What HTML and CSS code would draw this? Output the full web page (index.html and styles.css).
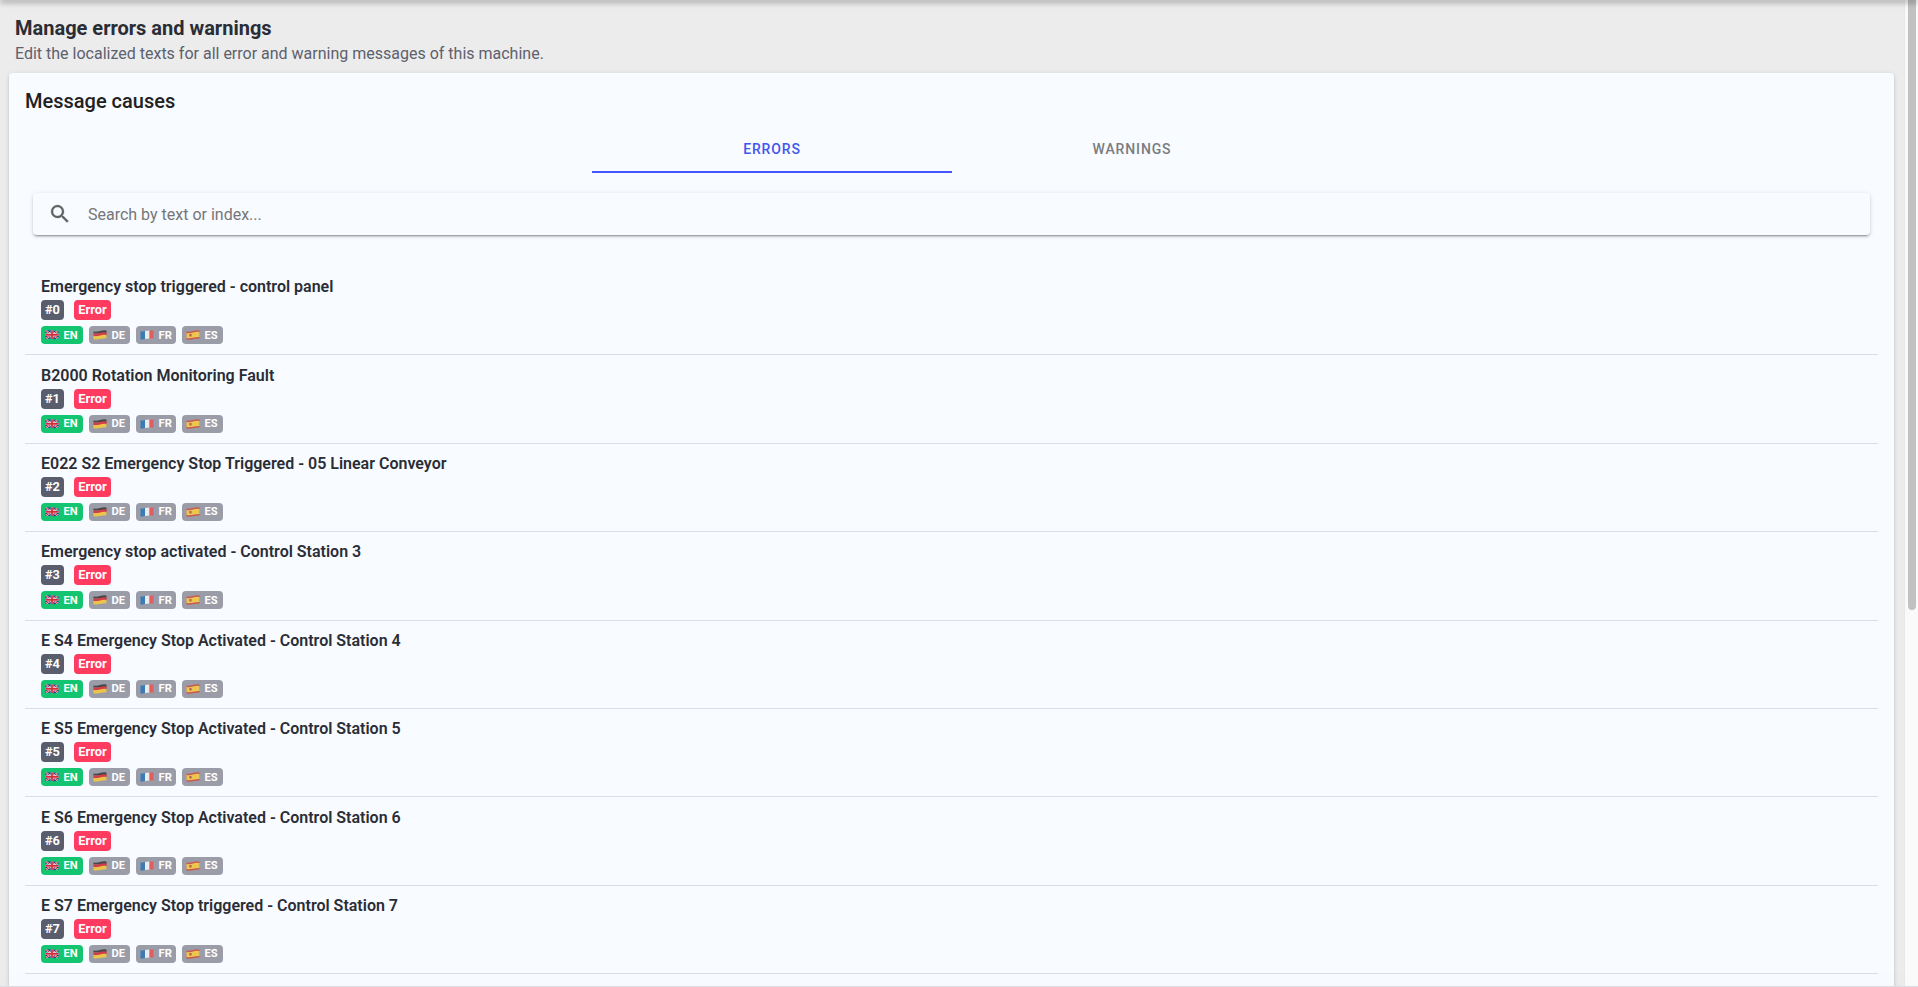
FILE: index.html
```html
<!DOCTYPE html>
<html lang="en">
<head>
  <meta charset="UTF-8">
  <title>Manage errors and warnings</title>
  <link rel="stylesheet" href="styles.css">
</head>
<body>

  <svg class="sprite" width="0" height="0">
    <symbol id="flag-en" viewBox="0 0 28 20">
      <path fill="#27417f" d="M1 2q7-2 13-1t13 0v16q-7 2-13 1t-13 0z"/>
      <path stroke="#fff" stroke-width="3" d="M2 2l24 15M26 2L2 17"/>
      <path stroke="#d22b3b" stroke-width="2" d="M2 2l24 15M26 2L2 17"/>
      <path stroke="#fff" stroke-width="5" d="M14 1v17M1 9.500h26"/>
      <path stroke="#d22b3b" stroke-width="3.500" d="M14 1v17M1 9.500h26"/>
    </symbol>
    <symbol id="flag-de" viewBox="0 0 28 20">
      <path fill="#333" d="M1 3q7 1 13-1t13-1v6H1z"/>
      <path fill="#e0262e" d="M1 7q7 1 13-1t13-1v7H1z"/>
      <path fill="#ffcf35" d="M1 12q7 1 13-1t13-1v6.500q-7 0-13 1.500t-13 .5z"/>
    </symbol>
    <symbol id="flag-fr" viewBox="0 0 28 20">
      <path fill="#2473b8" d="M1 3q5 0 9-1v16q-4 1-9 1z"/>
      <path fill="#fff" d="M10 2q4-1 9-1v16q-5 0-9 1z"/>
      <path fill="#f0504d" d="M19 1h8v16h-8z"/>
    </symbol>
    <symbol id="flag-es" viewBox="0 0 28 20">
      <path fill="#d9463a" d="M1 3q7 1 13-1t13-1v16q-7 0-13 1.500t-13 .5z"/>
      <path fill="#ffd23f" d="M1 6q7 1 13-1t13-1v10q-7 0-13 1.500t-13 .5z"/>
      <path fill="#b5482c" d="M7 8h4v5H7z"/>
    </symbol>
  </svg>

  <main class="content">
    <header class="page-header">
      <h1>Manage errors and warnings</h1>
      <p>Edit the localized texts for all error and warning messages of this machine.</p>
    </header>

    <section class="card">
      <h2>Message causes</h2>

      <nav class="tabs">
        <a class="tab active">Errors</a>
        <a class="tab">Warnings</a>
      </nav>

      <div class="search">
        <svg viewBox="0 0 24 24"><path d="M9.500,3A6.500,6.500 0 0,1 16,9.500C16,11.110 15.410,12.590 14.440,13.730L14.710,14H15.500L20.500,19L19,20.500L14,15.500V14.710L13.730,14.440C12.590,15.410 11.110,16 9.500,16A6.500,6.500 0 0,1 3,9.500A6.500,6.500 0 0,1 9.500,3M9.500,5C7,5 5,7 5,9.500C5,12 7,14 9.500,14C12,14 14,12 14,9.500C14,7 12,5 9.500,5Z"/></svg>
        <input type="text" placeholder="Search by text or index...">
      </div>

      <div class="list" id="list"></div>
    </section>
  </main>

  <aside class="scrollbar"><div class="thumb"></div></aside>
  <div class="top-shadow"></div>
  <div class="bottom-shadow"></div>

  <script>
    const messages = [
      'Emergency stop triggered - control panel',
      'B2000 Rotation Monitoring Fault',
      'E022 S2 Emergency Stop Triggered - 05 Linear Conveyor',
      'Emergency stop activated - Control Station 3',
      'E S4 Emergency Stop Activated - Control Station 4',
      'E S5 Emergency Stop Activated - Control Station 5',
      'E S6 Emergency Stop Activated - Control Station 6',
      'E S7 Emergency Stop triggered - Control Station 7'
    ];
    const languages = ['en', 'de', 'fr', 'es'];

    document.getElementById('list').innerHTML = messages.map((text, index) => `
      <div class="item">
        <div class="item-title">${text}</div>
        <div class="badges">
          <span class="badge index">#${index}</span>
          <span class="badge error">Error</span>
        </div>
        <div class="languages">
          ${languages.map(lang => `
            <span class="lang ${lang}"><svg><use href="#flag-${lang}"/></svg>${lang.toUpperCase()}</span>
          `).join('')}
        </div>
      </div>
    `).join('');
  </script>

</body>
</html>
```
FILE: styles.css
```css
* {
  box-sizing: border-box;
}

body {
  font-family: Roboto, sans-serif;
  background-color: #fafafa;
  color: #2a2d36;
  margin: 0;
  height: 100vh;
  display: flex;
  overflow: hidden;
}

h1, h2, p {
  margin: 0;
}

.sprite {
  position: absolute;
}

.content {
  flex: 1;
  display: flex;
  flex-direction: column;
  background-color: #ececec;
  padding: 14px 10px 0 9px;
}

.page-header {
  height: 59px;
  padding-left: 6px;
}

h1 {
  font-size: 20px;
  font-weight: 700;
  line-height: 28px;
}

.page-header p {
  color: #5d606d;
  font-size: 16px;
  line-height: 24px;
}

.card {
  flex: 1;
  background-color: #f8fbff;
  border-radius: 4px 4px 0 0;
  padding: 14px 16px 0;
  box-shadow: 0 3px 1px -2px rgba(0,0,0,.2), 0 2px 2px rgba(0,0,0,.14), 0 1px 5px rgba(0,0,0,.12);
}

h2 {
  color: #212121;
  font-size: 20px;
  font-weight: 500;
  line-height: 28px;
}

.tabs {
  display: flex;
  justify-content: center;
  margin-top: 10px;
}

.tab {
  width: 360px;
  height: 48px;
  line-height: 49px;
  padding-left: 1px;
  text-align: center;
  text-transform: uppercase;
  font-size: 14px;
  font-weight: 500;
  letter-spacing: .85px;
  color: #7b7d80;
}

.tab.active {
  color: #4255ee;
  border-bottom: 2px solid #4255ff;
}

.search {
  display: flex;
  align-items: center;
  height: 42px;
  margin: 20px 8px 32px;
  padding-left: 15px;
  border-radius: 4px;
  box-shadow: 0 3px 1px -2px rgba(0,0,0,.2), 0 2px 2px rgba(0,0,0,.14), 0 1px 5px rgba(0,0,0,.12);
}

.search svg {
  width: 24px;
  height: 24px;
  fill: #616161;
  stroke: #616161;
  stroke-width: .3;
}

.search input {
  flex: 1;
  margin-left: 16px;
  padding: 0;
  border: 0;
  outline: 0;
  background: none;
  font: 16px Roboto, sans-serif;
}

.search input::placeholder {
  color: #757679;
}

.item {
  height: 88.4px;
  padding: 9.2px 16px 0;
  border-bottom: 1px solid #dadee5;
}

.item-title {
  margin-bottom: 2px;
  font-size: 16px;
  font-weight: 600;
  line-height: 22px;
}

.badges {
  display: flex;
  gap: 10px;
}

.badge {
  height: 20px;
  line-height: 20px;
  border-radius: 4px;
  color: #fff;
  font-size: 12.8px;
  font-weight: 700;
  text-align: center;
}

.index {
  width: 23px;
  background-color: #5a5e6c;
}

.error {
  width: 37px;
  background-color: #ff3b5f;
}

.languages {
  display: flex;
  gap: 6px;
  margin-top: 6px;
}

.lang {
  display: flex;
  align-items: center;
  width: 41px;
  height: 18px;
  padding-left: 4px;
  border-radius: 4px;
  background-color: #9a9ca8;
  color: #fff;
  font-size: 11.2px;
  font-weight: 700;
}

.lang svg {
  width: 14px;
  height: 10px;
  margin-right: 4.5px;
  opacity: .8;
}

.lang.en {
  width: 42px;
  background-color: #13c571;
}

.lang.en svg {
  opacity: 1;
}

.lang.fr {
  width: 40px;
}

.scrollbar {
  width: 14px;
  padding: 0 2px 0 3px;
  border-left: 1px solid #e8e8e8;
}

.thumb {
  height: 610px;
  background-color: #c1c1c1;
  border-radius: 0 0 4px 4px;
}

/* shadows cast by the app bar and footer over the scrolled content */
.top-shadow {
  position: absolute;
  top: -4px;
  left: 0;
  right: 0;
  height: 4px;
  box-shadow: 0 2px 4px -1px rgba(0,0,0,.2), 0 4px 5px rgba(0,0,0,.14), 0 1px 10px rgba(0,0,0,.12);
}

.bottom-shadow {
  position: absolute;
  bottom: 0;
  left: 0;
  right: 0;
  height: 1px;
  background-color: #dcdde2;
  box-shadow: 0 -2px 16px rgba(90,94,108,.15);
}
```
